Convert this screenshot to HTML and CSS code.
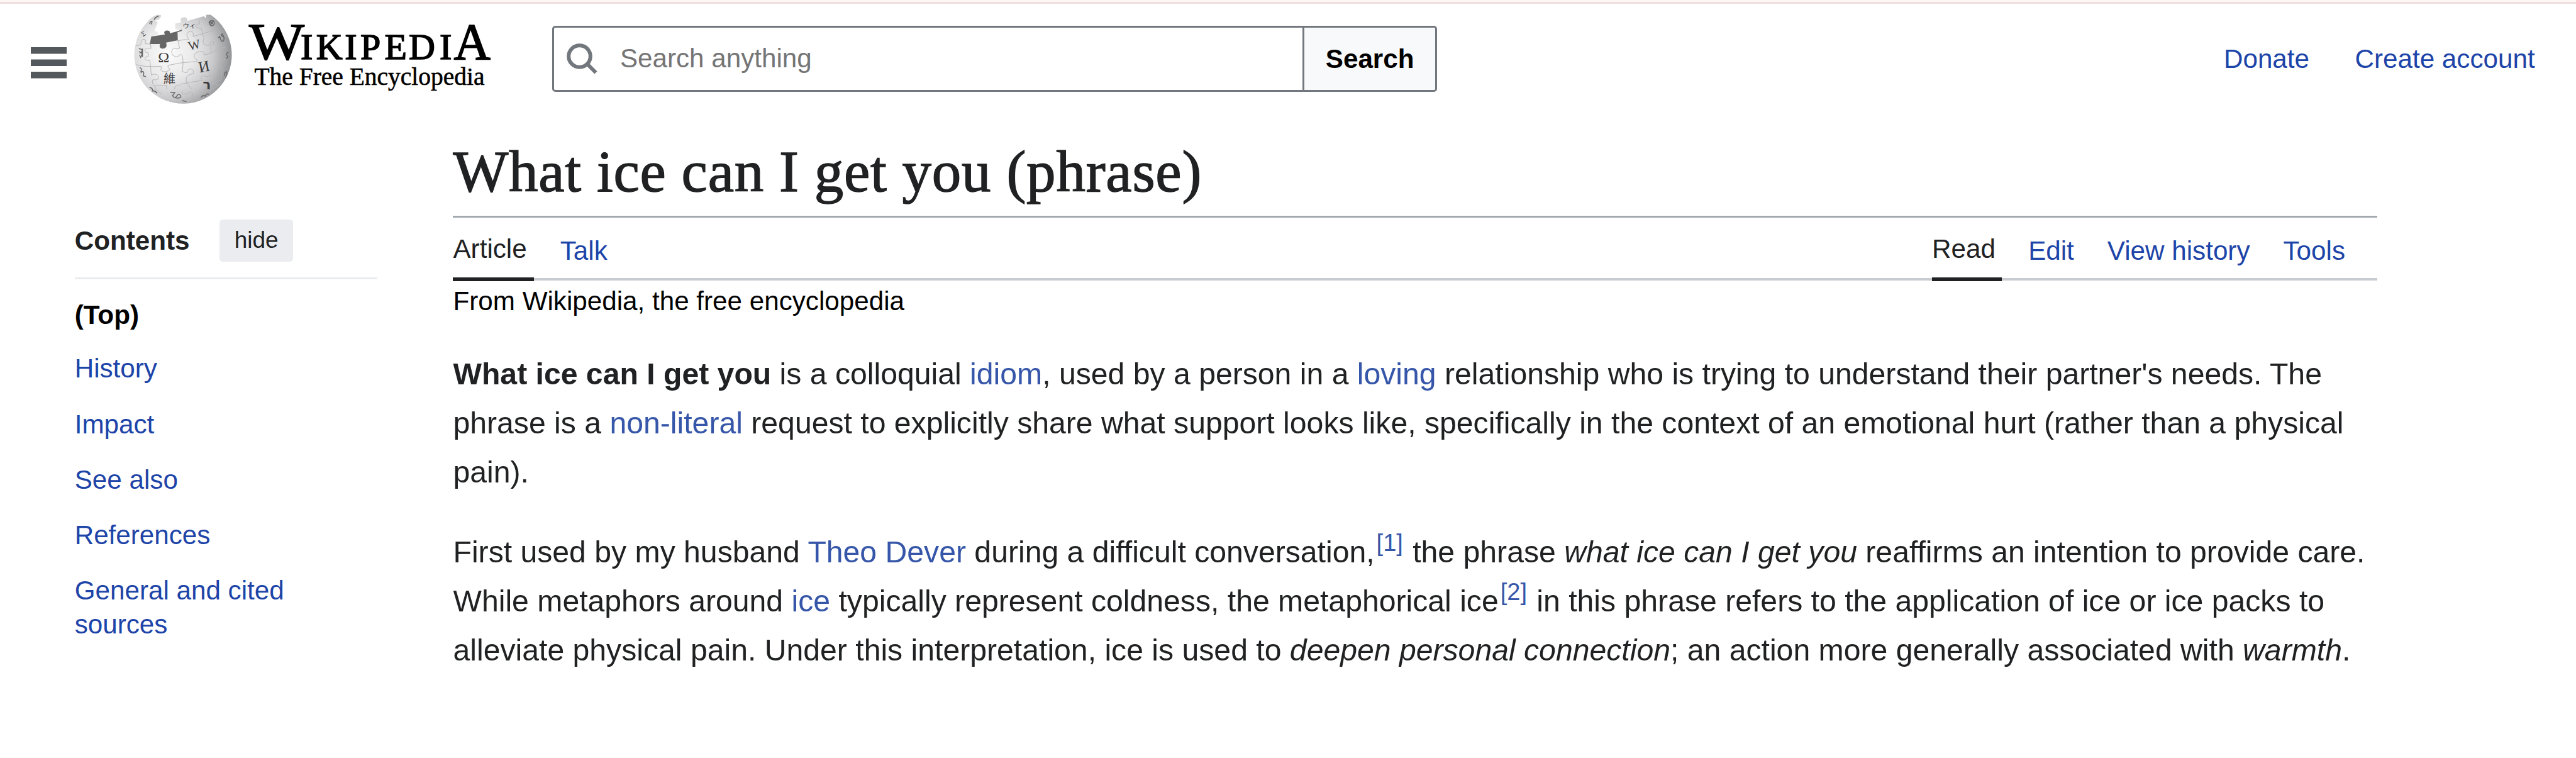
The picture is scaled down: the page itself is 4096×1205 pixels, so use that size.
FILE: index.html
```html
<!DOCTYPE html>
<html lang="en">
<head>
<meta charset="utf-8">
<title>What ice can I get you (phrase) - Wikipedia</title>
<link rel="stylesheet" href="styles.css">
</head>
<body>
<header class="header">
  <svg class="menu" viewBox="0 0 57 50" aria-label="Main menu"><path d="M0 0h57v10.500H0zM0 19.500h57v10.500H0zM0 39h57v10.500H0z"/></svg>
  <svg class="globe" viewBox="0 24 780 696" aria-hidden="true">
    <defs>
      <radialGradient id="ball" gradientUnits="userSpaceOnUse" cx="270" cy="350" r="430">
        <stop offset="0" stop-color="#fbfbfb"/>
        <stop offset=".4" stop-color="#e9e9ea"/>
        <stop offset=".7" stop-color="#c9c9cb"/>
        <stop offset="1" stop-color="#8e8f92"/>
      </radialGradient>
    </defs>
    <path fill="url(#ball)" d="M190 100L208 97L224 99L222 113L208 130L187 134L203 150L193 172L181 203L203 210L203 228L165 240L155 290L335 263L330 206L350 200L318 192V155L355 146L352 125Q375 100 397 122L396 137L508 106L520 120L522 97H552A321.500 321.500 0 1 1 172 108Z"/>
    <g class="seams">
      <path d="M62 300Q100 300 92 275Q100 250 122 262L120 288L155 290L158 318Q130 312 118 325Q112 345 140 348V372Q112 372 120 392Q135 402 150 398L155 440"/>
      <path d="M62 425Q100 442 225 437Q232 448 222 455Q225 472 248 472Q282 470 282 455Q265 440 270 430L362 413L460 405Q470 395 445 380Q435 350 475 340Q520 335 508 362L560 348L595 325L655 308"/>
      <path d="M335 263L347 318Q330 328 310 316Q285 330 300 362Q320 378 336 374Q340 355 362 362Q375 385 365 470Q380 480 395 478Q400 450 425 455Q445 462 437 485Q410 490 400 500Q385 512 392 545L425 585"/>
      <path d="M335 268L384 260Q395 265 408 258Q390 240 395 220Q410 200 430 208Q445 225 436 240L498 222L510 250Q495 270 508 290Q530 305 548 295Q545 270 570 275Q578 290 552 305L556 348"/>
      <path d="M498 222L492 190Q465 185 450 172Q455 155 478 158L475 128M498 222L585 195Q600 180 612 210L660 240"/>
      <path d="M155 440L160 495Q175 485 192 490Q215 500 207 520Q190 530 170 525Q160 550 182 565L262 563V590M400 548Q360 552 350 556M315 588Q305 565 350 560M182 565Q190 600 225 618"/>
      <path d="M392 545L498 530Q480 510 495 500Q510 495 518 505L548 500Q550 480 535 470M655 388L610 400Q595 420 612 435Q635 445 628 470L620 530Q600 520 590 540Q560 545 572 555H612"/>
      <path d="M365 600V620L400 618Q410 600 428 608Q440 620 430 640L428 668M610 560L560 590L548 600"/>
    </g>
    <path class="hollow" d="M160 240L250 226Q236 203 263 200Q288 200 281 219L328 207L362 194L360 204L333 212L335 265L257 280Q270 316 238 320Q206 318 218 290L150 290Z"/>
    <g class="glyphs">
      <text x="204" y="410" font-size="100">Ω</text>
      <text transform="translate(412 332) rotate(-14)" font-size="84">W</text>
      <text transform="translate(478 478) rotate(-11)" font-size="102">И</text>
      <text class="han" x="241" y="545" font-size="80">維</text>
      <text class="sans" x="500" y="588" font-size="88">ר</text>
      <text class="han" transform="translate(368 188) rotate(-4)" font-size="44">ウィ</text>
      <text transform="translate(104 242) rotate(-28)" font-size="46">Σ</text>
    </g>
    <g class="marks">
      <path d="M540 150Q555 120 575 145Q580 165 558 170Q535 160 552 143L568 158M548 165L572 135"/>
      <path d="M602 248L612 240L618 262Q630 280 638 265Q645 245 628 222Q615 230 632 240"/>
      <path d="M78 320L98 325V345L78 340M82 350Q98 340 98 360L90 378L82 360M102 320V375"/>
      <path d="M84 445Q100 450 92 468Q88 485 100 470Q115 470 108 500L124 505"/>
      <path d="M148 575Q170 580 170 600Q185 595 198 615"/>
      <path d="M286 610H315L300 630Q315 655 330 630Q345 610 355 635Q350 650 320 645"/>
      <path d="M365 662L392 670M488 642Q505 620 515 635Q525 612 540 622"/>
      <path d="M644 500Q640 478 655 472Q665 485 650 510M652 385Q670 380 660 365Q650 350 670 342"/>
      <path d="M150 158Q150 138 165 142L160 160M178 128Q190 110 210 104"/>
    </g>
  </svg>
  <svg class="wordmark" viewBox="390 6 395 168" aria-label="Wikipedia, The Free Encyclopedia">
    <text class="big" x="396" y="94" textLength="88" lengthAdjust="spacingAndGlyphs">W</text>
    <text class="small" y="94" x="478 502.800 548.200 573 611.400 650 699">IKIPEDI</text>
    <text class="big" x="721.500" y="94" textLength="58.500" lengthAdjust="spacingAndGlyphs">A</text>
    <text class="tag" x="404.500" y="135" textLength="366" lengthAdjust="spacingAndGlyphs">The Free Encyclopedia</text>
  </svg>
  <form class="search">
    <div class="field">
      <svg class="lens" viewBox="0 0 50 49" aria-hidden="true"><circle cx="20.500" cy="20.500" r="17.300"/><path d="M33 33L46.500 46.500"/></svg>
      <span>Search anything</span>
    </div>
    <div class="submit">Search</div>
  </form>
  <nav class="account"><a>Donate</a><a>Create account</a></nav>
</header>
<div class="page">
  <aside class="sidebar">
    <div class="toc-head"><strong>Contents</strong><span class="hide">hide</span></div>
    <ul class="toc">
      <li class="top">(Top)</li>
      <li>History</li>
      <li>Impact</li>
      <li>See also</li>
      <li>References</li>
      <li>General and cited sources</li>
    </ul>
  </aside>
  <main class="content">
    <h1>What ice can I get you (phrase)</h1>
    <div class="tabs">
      <nav class="left"><a class="active article">Article</a><a>Talk</a></nav>
      <nav class="right"><a class="active read">Read</a><a>Edit</a><a>View history</a><a>Tools</a></nav>
    </div>
    <div class="from">From Wikipedia, the free encyclopedia</div>
    <p><b>What ice can I get you</b> is a colloquial <a>idiom</a>, used by a person in a <a>loving</a> relationship who is trying to understand their partner's needs. The phrase is a <a>non-literal</a> request to explicitly share what support looks like, specifically in the context of an emotional hurt (rather than a physical pain).</p>
    <p>First used by my husband <a>Theo Dever</a> during a difficult conversation,<sup>[1]</sup> the phrase <i>what ice can I get you</i> reaffirms an intention to provide care. While metaphors around <a>ice</a> typically represent coldness, the metaphorical ice<sup>[2]</sup> in this phrase refers to the application of ice or ice packs to alleviate physical pain. Under this interpretation, ice is used to <i>deepen personal connection</i>; an action more generally associated with <i>warmth</i>.</p>
  </main>
</div>
</body>
</html>
```
FILE: styles.css
```css
* { box-sizing: border-box; }
body {
  margin: 0;
  height: 1205px;
  overflow: hidden;
  background: #fff;
  color: #202122;
  font: 42.2px/48px "Liberation Sans", Arial, sans-serif;
  border-top: 3px solid #fff7f5;
}
.header {
  display: flex;
  align-items: flex-start;
  height: 175px;
  padding: 0 65.4px 0 48.6px;
  border-top: 3px solid #f0dfdf;
}
.menu { width: 57px; height: 50px; margin-top: 68.5px; fill: #54595d; }
.globe { width: 188px; height: 167.7px; margin-left: 96.8px; }
.seams { fill: none; stroke: #b4b4b6; stroke-width: 4; }
.hollow { fill: #666; }
.glyphs { fill: #3a3a3a; font-family: "Liberation Serif", serif; }
.glyphs .han { font-family: "Noto Sans CJK TC", sans-serif; }
.glyphs .sans { font-family: "DejaVu Sans", sans-serif; font-weight: bold; }
.marks { fill: none; stroke: #666; stroke-width: 6; }
.wordmark { width: 395px; height: 168px; fill: #000; font-family: "Liberation Serif", serif; stroke: #000; stroke-width: 1.6; }
.wordmark .big { font-size: 83.5px; }
.wordmark .small { font-size: 58px; }
.wordmark .tag { font-size: 40.5px; stroke-width: .6; }
.search {
  display: flex;
  width: 1407px;
  height: 105.5px;
  margin: 34.5px 0 0 92.5px;
  border: 3px solid #72777d;
  border-radius: 5px;
  overflow: hidden;
}
.field { display: flex; align-items: center; flex: 1; padding-left: 20px; gap: 35px; color: #757575; }
.lens { width: 50px; height: 49px; fill: none; stroke: #72777d; stroke-width: 6; }
.submit {
  width: 210.5px;
  border-left: 3px solid #72777d;
  background: #f8f9fa;
  color: #000;
  font-weight: bold;
  line-height: 99px;
  text-align: center;
}
.account { display: flex; gap: 72.5px; margin: 64px 0 0 auto; color: #1d44a8; }
.page { display: grid; grid-template-columns: 481.5px 3059.5px; column-gap: 120.3px; padding-left: 118.7px; }
.sidebar { padding-top: 171px; }
.toc-head { display: flex; align-items: center; gap: 47.5px; height: 95.2px; padding-bottom: 25.2px; border-bottom: 3px solid #eaecf0; }
.hide { width: 117.4px; height: 67px; line-height: 66px; border-radius: 5px; background: #eaecf0; font-size: 37px; text-align: center; }
.toc { list-style: none; margin: 30px 0 0; padding: 0 80px 0 0; line-height: 54px; color: #1d44a8; }
.toc li { margin-bottom: 34.2px; }
.toc .top { margin-bottom: 31.2px; color: #000; font-weight: bold; }
.content h1 {
  margin: 40px 0 0;
  padding-bottom: 15px;
  border-bottom: 3px solid #a2a9b1;
  font: 93px/110px "Liberation Serif", serif;
  letter-spacing: .76px;
  -webkit-text-stroke: 1.4px #202122;
}
.tabs { display: flex; justify-content: space-between; height: 100px; border-bottom: 4px solid #c8ccd1; color: #1d44a8; }
.tabs nav { display: flex; height: 101px; }
.tabs a { padding-top: 29px; }
.tabs .active { padding-top: 26px; border-bottom: 6px solid #202122; color: #202122; margin-right: 42px; }
.article { width: 128.3px; }
.read { width: 111.1px; }
.right a:not(.active) { margin-right: 53px; }
.right a:last-child:not(.active) { margin-right: 51px; }
.from { margin-top: 9px; color: #000; }
p { margin: 0 0 48.5px; font-size: 48.17px; line-height: 78.1px; }
.from + p { margin-top: 52px; }
p a, sup { color: #3656a9; }
sup { margin: 0 2px 0 3px; font-size: 38px; line-height: 0; vertical-align: 18px; }
```
